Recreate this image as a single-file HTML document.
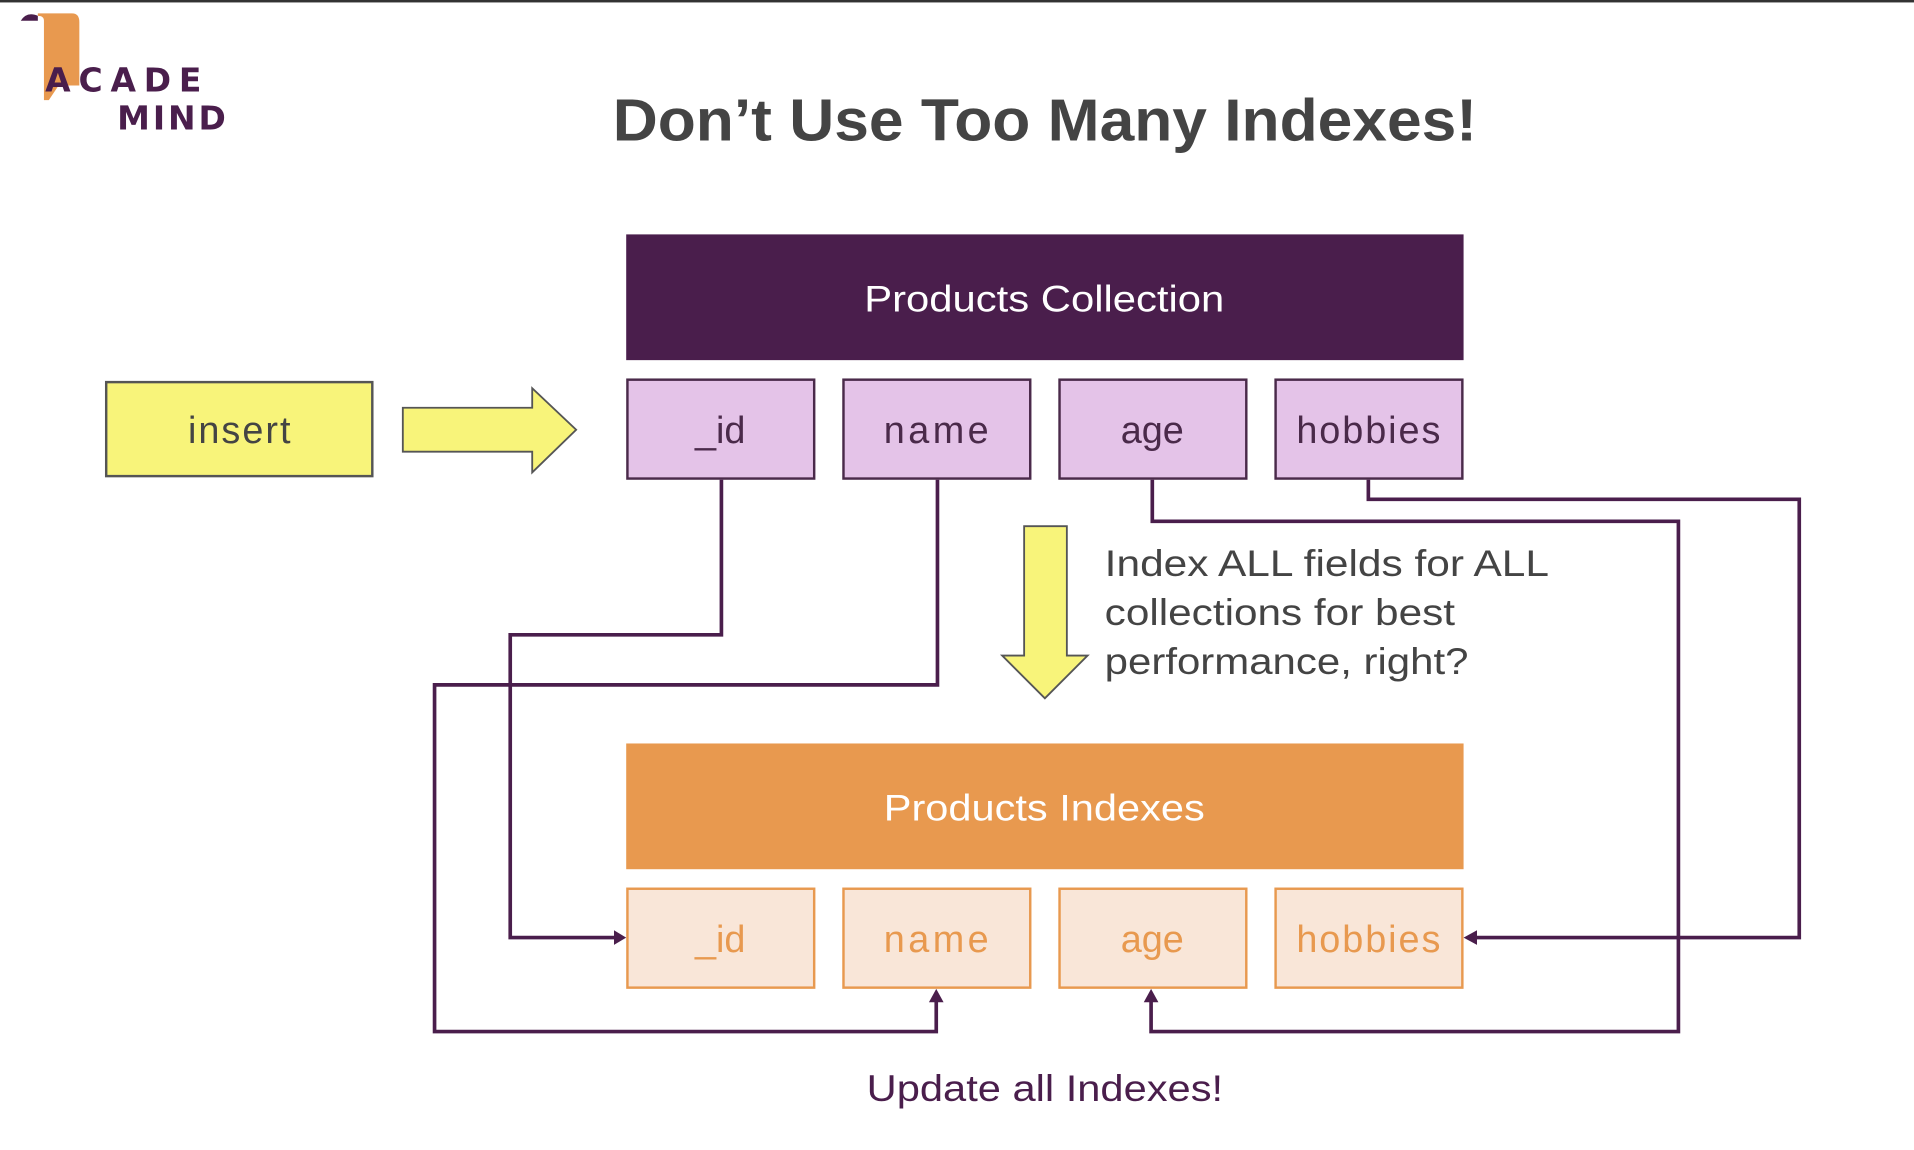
<!DOCTYPE html>
<html><head><meta charset="utf-8"><style>
html,body{margin:0;padding:0;background:#fff;width:1914px;height:1150px;overflow:hidden}
svg{display:block}
text{font-family:"Liberation Sans","DejaVu Sans",sans-serif}
</style></head><body>
<svg width="1914" height="1150" viewBox="0 0 1568 942" preserveAspectRatio="none" xmlns="http://www.w3.org/2000/svg">
<rect x="0" y="0" width="1568" height="2" fill="#333"/>
<!-- logo -->
<path d="M17 17 Q22 9 31 13 L31 17 Z" fill="#4a1e4c"/>
<path d="M31 11 H59 Q65 11 65 18 V70 L48 70 L40 82 L36 82 V17 Q36 13 31 13 Z" fill="#e8994f"/>
<text x="37" y="75" font-size="27" font-weight="bold" fill="#4a1e4c" style="font-family:'DejaVu Sans',sans-serif" textLength="128" lengthAdjust="spacing">ACADE</text>
<text x="96" y="106" font-size="27" font-weight="bold" fill="#4a1e4c" style="font-family:'DejaVu Sans',sans-serif" textLength="89" lengthAdjust="spacing">MIND</text>
<!-- title -->
<text x="502" y="115" font-size="49" font-weight="bold" fill="#444" textLength="708" lengthAdjust="spacingAndGlyphs">Don’t Use Too Many Indexes!</text>
<!-- collection -->
<rect x="513" y="192" width="686" height="103" fill="#4a1e4c"/>
<text x="708" y="255" font-size="30" fill="#fff" textLength="295" lengthAdjust="spacingAndGlyphs">Products Collection</text>
<g stroke="#4a2a4a" stroke-width="2" fill="#e4c3e8">
<rect x="514" y="311" width="153" height="81"/><rect x="691" y="311" width="153" height="81"/>
<rect x="868" y="311" width="153" height="81"/><rect x="1045" y="311" width="153" height="81"/>
</g>
<g font-size="31" fill="#4a2a4a" text-anchor="middle">
<text x="590" y="363">_id</text><text x="767" y="363" textLength="86">name</text><text x="944" y="363">age</text><text x="1121" y="363" textLength="118">hobbies</text>
</g>
<rect x="87" y="313" width="218" height="77" fill="#f8f47a" stroke="#555" stroke-width="2"/>
<text x="196" y="363" font-size="31" fill="#444" text-anchor="middle" textLength="84">insert</text>
<path d="M330 334 H436 V318 L472 352 L436 387 V370 H330 Z" fill="#f8f47a" stroke="#555" stroke-width="1.5"/>
<path d="M839 431 H874 V537 H891 L856 572 L821 537 H839 Z" fill="#f8f47a" stroke="#555" stroke-width="1.5"/>
<g font-size="30" fill="#444">
<text x="905" y="472" textLength="364" lengthAdjust="spacingAndGlyphs">Index ALL fields for ALL</text>
<text x="905" y="512" textLength="287" lengthAdjust="spacingAndGlyphs">collections for best</text>
<text x="905" y="552" textLength="298" lengthAdjust="spacingAndGlyphs">performance, right?</text>
</g>
<!-- indexes -->
<rect x="513" y="609" width="686" height="103" fill="#e8994f"/>
<text x="724" y="672" font-size="30" fill="#fff" textLength="263" lengthAdjust="spacingAndGlyphs">Products Indexes</text>
<g stroke="#e8994f" stroke-width="2" fill="#f9e6d8">
<rect x="514" y="728" width="153" height="81"/><rect x="691" y="728" width="153" height="81"/>
<rect x="868" y="728" width="153" height="81"/><rect x="1045" y="728" width="153" height="81"/>
</g>
<g font-size="31" fill="#e8994f" text-anchor="middle">
<text x="590" y="780">_id</text><text x="767" y="780" textLength="86">name</text><text x="944" y="780">age</text><text x="1121" y="780" textLength="118">hobbies</text>
</g>
<!-- lines -->
<g stroke="#4a1e4c" stroke-width="3" fill="none">
<path d="M591 393 V520 H418 V768 H505"/>
<path d="M768 393 V561 H356 V845 H767 V818"/>
<path d="M944 393 V427 H1375 V845 H943 V818"/>
<path d="M1121 393 V409 H1474 V768 H1208"/>
</g>
<g fill="#4a1e4c">
<path d="M513 768 L503 762 V774 Z"/>
<path d="M767 810 L761 821 H773 Z"/>
<path d="M943 810 L937 821 H949 Z"/>
<path d="M1199 768 L1210 762 V774 Z"/>
</g>
<text x="710" y="902" font-size="30" fill="#4a1e4c" textLength="292" lengthAdjust="spacingAndGlyphs">Update all Indexes!</text>
</svg>
</body></html>
